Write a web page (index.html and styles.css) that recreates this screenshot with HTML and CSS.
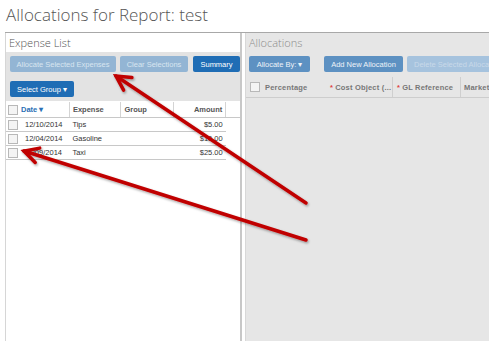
FILE: index.html
```html
<!DOCTYPE html>
<html lang="en">
<head>
    <meta charset="UTF-8">
    <meta name="viewport" content="width=device-width, initial-scale=1.0">
    <title>Allocations for Report: test</title>
    <link rel="stylesheet" href="styles.css">
</head>
<body>
    <div class="page">
        <h1 class="title">Allocations for Report: test</h1>
        <div class="panels">
            <section class="panel expenses">
                <div class="panel-title">Expense List</div>
                <div class="toolbar">
                    <div class="row">
                        <button class="btn disabled btn-allocate">Allocate Selected Expenses</button>
                        <button class="btn disabled btn-clear">Clear Selections</button>
                        <button class="btn btn-summary">Summary</button>
                    </div>
                    <div class="row">
                        <button class="btn btn-group">Select Group &#9662;</button>
                    </div>
                </div>
                <table class="grid">
                    <thead>
                        <tr>
                            <th class="col-check"><span class="check"></span></th>
                            <th class="col-date sorted">Date &#9662;</th>
                            <th class="col-expense">Expense</th>
                            <th class="col-group">Group</th>
                            <th class="col-amount">Amount</th>
                            <th class="col-fill"></th>
                        </tr>
                    </thead>
                    <tbody>
                        <tr>
                            <td class="col-check"><span class="check"></span></td>
                            <td>12/10/2014</td>
                            <td>Tips</td>
                            <td></td>
                            <td class="col-amount">$5.00</td>
                            <td class="col-fill"></td>
                        </tr>
                        <tr>
                            <td class="col-check"><span class="check"></span></td>
                            <td>12/04/2014</td>
                            <td>Gasoline</td>
                            <td></td>
                            <td class="col-amount">$10.00</td>
                            <td class="col-fill"></td>
                        </tr>
                        <tr>
                            <td class="col-check"><span class="check"></span></td>
                            <td>11/09/2014</td>
                            <td>Taxi</td>
                            <td></td>
                            <td class="col-amount">$25.00</td>
                            <td class="col-fill"></td>
                        </tr>
                    </tbody>
                </table>
            </section>

            <section class="panel allocations">
                <div class="panel-title">Allocations</div>
                <div class="toolbar">
                    <div class="row">
                        <button class="btn btn-mid btn-by">Allocate By: &#9662;</button>
                        <span class="sep"></span>
                        <button class="btn btn-mid btn-add">Add New Allocation</button>
                        <button class="btn disabled btn-delete">Delete Selected Allocations</button>
                    </div>
                </div>
                <div class="alloc-head">
                    <div class="acol acol-pct"><span class="check"></span>Percentage</div>
                    <div class="acol acol-cost"><span class="req">*</span> Cost Object (...</div>
                    <div class="acol acol-gl"><span class="req">*</span> GL Reference</div>
                    <div class="acol acol-market">Market</div>
                </div>
            </section>
        </div>

        <svg class="arrows" width="489" height="341" viewBox="0 0 489 341">
            <defs>
                <filter id="shadow" x="-10%" y="-10%" width="120%" height="120%">
                    <feDropShadow dx="1" dy="1.5" stdDeviation="1" flood-color="#000" flood-opacity="0.35"/>
                </filter>
            </defs>
            <g fill="none" stroke="#c00000" stroke-width="3.5" stroke-linecap="round" stroke-linejoin="miter" filter="url(#shadow)">
                <line x1="306" y1="203" x2="116" y2="76"/>
                <polyline points="123.6,90.1 116,76 131.9,77.6"/>
                <line x1="306" y1="240" x2="24" y2="151"/>
                <polyline points="35.2,162.4 24,151 39.7,148.1"/>
            </g>
        </svg>
    </div>
</body>
</html>
```

FILE: styles.css
```css
body {
    margin: 0;
    font-family: "Liberation Sans", Arial, sans-serif;
    background: #fff;
    overflow: hidden;
}
.page {
    position: relative;
    width: 489px;
    height: 341px;
    padding-left: 5px;
    box-sizing: border-box;
    overflow: hidden;
}
.title {
    margin: 0;
    height: 32px;
    padding-left: 1px;
    font-family: "Open Sans", sans-serif;
    font-weight: 300;
    font-size: 17px;
    line-height: 30px;
    color: #555;
    border-bottom: 1px solid #a8a8a8;
    white-space: nowrap;
}
.panels {
    display: flex;
    gap: 3px;
    height: 308px;
}
.panel {
    display: flex;
    flex-direction: column;
}
.expenses {
    width: 237px;
    flex: none;
    box-sizing: border-box;
    border-left: 1px solid #d6d6d6;
    border-right: 2px solid #c8c8c8;
}
.allocations {
    flex: none;
    width: 260px;
    background: #e6e6e6;
    border-left: 1px solid #d8d8d8;
    overflow: hidden;
}
.panel-title {
    height: 19px;
    padding-left: 3px;
    font-family: "Open Sans", sans-serif;
    font-weight: 300;
    font-size: 11px;
    line-height: 20px;
    color: #555;
}
.allocations .panel-title {
    color: #8a8a8a;
}
.toolbar {
    background: #e3e3e3;
    padding: 4px 0 4px 4px;
    display: flex;
    flex-direction: column;
    gap: 9px;
}
.allocations .toolbar {
    background: none;
    padding: 4px 0 4px 3px;
}
.row {
    display: flex;
    align-items: center;
    gap: 4px;
    white-space: nowrap;
}
.btn {
    height: 16px;
    padding: 0;
    border: none;
    border-radius: 2px;
    font-family: "Liberation Sans", Arial, sans-serif;
    font-size: 7.5px;
    color: #fff;
    background: #1f6db5;
    flex: none;
}
.btn.disabled {
    background: #93b5d4;
    color: #d8e5f0;
}
.btn.btn-mid {
    background: #5d91c2;
    color: #eef3f8;
}
.btn-allocate { width: 106px; }
.btn-clear { width: 68px; }
.btn-summary { width: 47px; margin-left: 1px; }
.btn-group { width: 64px; }
.btn-by { width: 61px; }
.btn-add { width: 79px; }
.btn-delete {
    width: 100px;
    text-align: left;
    padding-left: 7px;
    overflow: hidden;
}
.allocations .btn.disabled {
    background: #a6c3de;
    color: #c8d9e9;
}
.sep {
    width: 1px;
    height: 10px;
    background: #c8c8c8;
    margin: 0 4px 0 2px;
}
.grid {
    border-collapse: collapse;
    width: 234px;
    margin-top: 1px;
    font-size: 7.5px;
    color: #333;
}
.grid th {
    height: 15px;
    padding: 0 3px;
    text-align: left;
    font-weight: bold;
    color: #555;
    border-right: 1px solid #d4d4d4;
    border-bottom: 1px solid #c8c8c8;
}
.grid td {
    height: 13px;
    padding: 0 3px;
    border-bottom: 1px solid #c8c8c8;
}
.grid .col-check {
    width: 10px;
    padding: 0 0 0 2px;
    border-right: none;
}
.grid th.col-check { border-right: none; }
.grid td:nth-child(2) { padding-left: 7px; }
.grid th.sorted { color: #2a6fb5; }
.col-date { width: 45px; }
.col-expense { width: 45px; }
.col-group { width: 46px; }
.grid .col-amount {
    width: 46px;
    text-align: right;
}
.grid .col-fill {
    width: 8px;
    border-bottom: none;
    border-right: none;
}
.grid th.col-fill { border-bottom: 1px solid #c8c8c8; }
.check {
    display: inline-block;
    width: 8px;
    height: 8px;
    border: 1px solid #b8b8b8;
    background: #f4f4f4;
    vertical-align: middle;
}
.alloc-head {
    display: flex;
    height: 20px;
    margin-top: 1px;
    border-bottom: 1px solid #cdcdcd;
    font-size: 7.5px;
    font-weight: bold;
    color: #777;
    letter-spacing: 0.2px;
    white-space: nowrap;
}
.acol {
    display: flex;
    align-items: center;
    gap: 2px;
    box-sizing: border-box;
    border-right: 1px solid #cfcfcf;
    flex: none;
}
.acol-pct {
    width: 81px;
    padding-left: 4px;
    gap: 0;
    border-right: none;
}
.acol-pct .check { margin-right: 5px; }
.acol-cost { width: 66px; padding-left: 3px; }
.acol-gl { width: 68px; padding-left: 4px; }
.acol-market { padding-left: 3px; border-right: none; }
.req { color: #e04040; }
.arrows {
    position: absolute;
    left: 0;
    top: 0;
    pointer-events: none;
}
```
